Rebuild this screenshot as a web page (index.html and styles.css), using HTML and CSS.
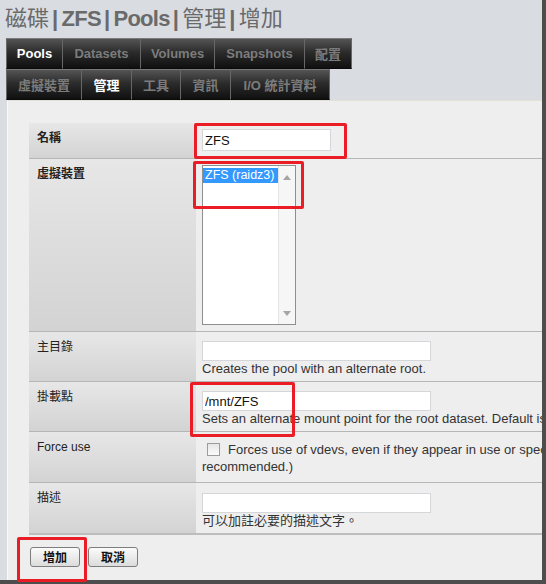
FILE: index.html
```html
<!DOCTYPE html>
<html lang="zh-Hant">
<head>
<meta charset="utf-8">
<title>磁碟 | ZFS | Pools | 管理 | 增加</title>
<link rel="stylesheet" href="styles.css">
</head>
<body>
<div class="frame">
  <h1 class="title"><span class="cjk">磁碟</span><span class="sep">|</span>ZFS<span class="sep">|</span>Pools<span class="sep">|</span><span class="cjk">管理</span><span class="sep">|</span><span class="cjk">增加</span></h1>
  <nav class="tabs">
    <div class="tabrow primary">
      <div class="tab active">Pools</div>
      <div class="tab">Datasets</div>
      <div class="tab">Volumes</div>
      <div class="tab">Snapshots</div>
      <div class="tab">配置</div>
    </div>
    <div class="tabrow secondary">
      <div class="tab">虛擬裝置</div>
      <div class="tab active">管理</div>
      <div class="tab">工具</div>
      <div class="tab">資訊</div>
      <div class="tab">I/O 統計資料</div>
    </div>
  </nav>
  <div class="panel">
    <div class="form">
      <div class="row">
        <div class="label strong">名稱</div>
        <div class="value"><input class="text short" type="text" value="ZFS"></div>
      </div>
      <div class="row">
        <div class="label strong">虛擬裝置</div>
        <div class="value vdev">
          <div class="listbox">
            <div class="options"><div class="opt sel">ZFS (raidz3)</div></div>
            <div class="scroll">
              <svg width="8" height="5" viewBox="0 0 8 5"><polygon points="0,5 4,0 8,5" fill="#a6a6a6"/></svg>
              <svg width="8" height="5" viewBox="0 0 8 5"><polygon points="0,0 8,0 4,5" fill="#a6a6a6"/></svg>
            </div>
          </div>
        </div>
      </div>
      <div class="row">
        <div class="label">主目錄</div>
        <div class="value field">
          <input class="text" type="text" value="">
          <div class="help">Creates the pool with an alternate root.</div>
        </div>
      </div>
      <div class="row">
        <div class="label">掛載點</div>
        <div class="value field">
          <input class="text" type="text" value="/mnt/ZFS">
          <div class="help">Sets an alternate mount point for the root dataset. Default is /mnt.</div>
        </div>
      </div>
      <div class="row">
        <div class="label">Force use</div>
        <div class="value check">
          <div class="help-line"><input class="cb" type="checkbox">Forces use of vdevs, even if they appear in use or specified as a spare. (Not</div>
          <div class="help-line">recommended.)</div>
        </div>
      </div>
      <div class="row last">
        <div class="label">描述</div>
        <div class="value desc">
          <input class="text" type="text" value="">
          <div class="help">可以加註必要的描述文字。</div>
        </div>
      </div>
    </div>
    <div class="actions">
      <button class="btn" type="button">增加</button>
      <button class="btn" type="button">取消</button>
    </div>
  </div>
</div>
<div class="mark m-name"></div>
<div class="mark m-vdev"></div>
<div class="mark m-mount"></div>
<div class="mark m-add"></div>
</body>
</html>
```

FILE: styles.css
```css
html, body {
  margin: 0;
  padding: 0;
}

body {
  width: 546px;
  height: 584px;
  position: relative;
  overflow: hidden;
  background: #ffffff;
  font-family: "Liberation Sans", "Noto Sans CJK TC", sans-serif;
  color: #222;
}

.frame {
  width: 542px;
  height: 580px;
  background: #d9dde2;
  border-right: 4px solid #4d4d4d;
  border-bottom: 4px solid #4d4d4d;
  display: flex;
  flex-direction: column;
  overflow: hidden;
}

.title {
  margin: 0;
  height: 38px;
  box-sizing: border-box;
  padding-left: 5px;
  font-size: 22px;
  line-height: 32px;
  font-weight: bold;
  color: #6a6a6a;
  white-space: nowrap;
  letter-spacing: -0.7px;
}

.title .cjk {
  font-family: "Noto Sans CJK TC", sans-serif;
  font-weight: normal;
  letter-spacing: 0;
}

.title .sep {
  margin: 0 4px 0 3px;
}

.tabs {
  margin-left: 6px;
  display: flex;
  flex-direction: column;
}

.tabrow {
  display: grid;
  height: 31px;
}

.tabrow.primary {
  grid-template-columns: 56px 78px 74px 90px 48px;
  width: 346px;
}

.tabrow.secondary {
  grid-template-columns: 75px 50px 49px 50px 100px;
  width: 324px;
}

.tab {
  box-sizing: border-box;
  display: flex;
  align-items: center;
  justify-content: center;
  background: linear-gradient(#545454, #2c2c2c 45%, #101010);
  border-top: 1px solid #7a7a7a;
  border-left: 1px solid #676767;
  border-bottom: 1px solid #0a0a0a;
  font-size: 13px;
  font-weight: bold;
  color: #7c7c7c;
  white-space: nowrap;
}

.tab:last-child {
  border-right: 1px solid #676767;
}

.tab.active {
  color: #ffffff;
}

.panel {
  flex: 1;
  margin-left: 7px;
  background: #eeeeee;
  border-top: 1px solid #e3e0d6;
  border-left: 1px solid #f8f8f8;
  padding: 22px 0 0 21px;
  overflow: hidden;
}

.form {
  width: 720px;
}

.row {
  display: grid;
  grid-template-columns: 167px 1fr;
  border-bottom: 1px solid #b6b6b6;
}

.row.last {
  border-bottom: 2px solid #bdbdbd;
}

.label {
  background: linear-gradient(#e7e7e7, #d3d3d3);
  padding: 7px 8px;
  font-size: 12px;
  line-height: 16px;
  color: #222;
}

.label.strong {
  font-weight: bold;
}

.value {
  padding: 6px 6px 7px;
}

.value.vdev {
  padding-bottom: 6px;
}

.value.field {
  padding: 9px 6px 4px;
}

.value.desc {
  padding: 10px 6px 4px;
}

.value.check {
  padding: 9px 6px 7px;
  font-size: 13px;
  line-height: 17px;
  color: #333;
  white-space: nowrap;
}

.text {
  display: block;
  box-sizing: border-box;
  width: 229px;
  height: 20px;
  margin: 0;
  border: 1px solid #d4d6da;
  background: #ffffff;
  padding: 0 2px;
  font: 13px "Liberation Sans", sans-serif;
  color: #111;
  outline: none;
}

.text.short {
  width: 129px;
  height: 22px;
}

.help {
  font-size: 13px;
  line-height: 16px;
  color: #333;
  white-space: nowrap;
}

.cb {
  -webkit-appearance: none;
  appearance: none;
  width: 13px;
  height: 13px;
  margin: 0 8px 0 5px;
  border: 1px solid #9c9c9c;
  background: linear-gradient(#e6e6e6, #fbfbfb);
  vertical-align: -2px;
}

.listbox {
  display: flex;
  box-sizing: border-box;
  width: 94px;
  height: 160px;
  border: 1px solid #8e8e8e;
  background: #ffffff;
}

.options {
  flex: 1;
  padding-top: 2px;
}

.opt {
  height: 15px;
  line-height: 15px;
  font-size: 12.5px;
  padding-left: 2px;
  white-space: nowrap;
  overflow: hidden;
}

.opt.sel {
  background: #3399ff;
  color: #ffffff;
}

.scroll {
  width: 16px;
  border-left: 1px solid #e4e4e4;
  background: #f6f6f6;
  display: flex;
  flex-direction: column;
  justify-content: space-between;
  align-items: center;
  padding: 9px 0 8px;
}

.scroll svg {
  display: block;
}

.actions {
  display: flex;
  gap: 8px;
  padding: 12px 0 0 1px;
}

.btn {
  height: 20px;
  padding: 0 12px;
  margin: 0;
  border: 1px solid #7d7d7d;
  border-radius: 3px;
  background: linear-gradient(#fbfbfb, #dcdcdc);
  font: bold 12px "Noto Sans CJK TC", sans-serif;
  line-height: 16px;
  color: #111;
}

.mark {
  position: absolute;
  box-sizing: border-box;
  border: 3px solid #ea1c26;
  border-radius: 2px;
}

.m-name {
  left: 194px;
  top: 123px;
  width: 153px;
  height: 36px;
}

.m-vdev {
  left: 193px;
  top: 161px;
  width: 111px;
  height: 48px;
}

.m-mount {
  left: 190px;
  top: 382px;
  width: 105px;
  height: 55px;
}

.m-add {
  left: 17px;
  top: 537px;
  width: 70px;
  height: 45px;
}
```
